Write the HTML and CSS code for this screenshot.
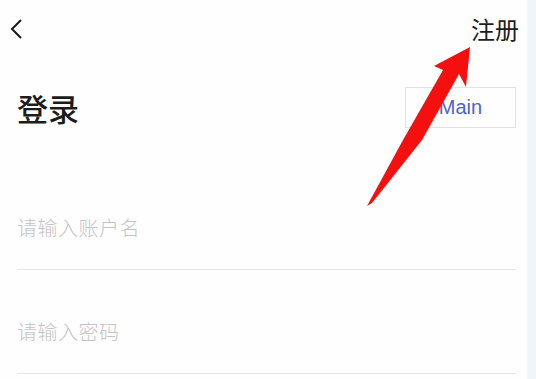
FILE: index.html
```html
<!DOCTYPE html>
<html lang="zh-CN">
<head>
    <meta charset="UTF-8">
    <meta name="viewport" content="width=device-width, initial-scale=1.0">
    <title>登录</title>
    <link rel="stylesheet" href="styles.css">
</head>
<body>
    <div class="page">
        <div class="topbar">
            <svg class="back" width="14" height="22" viewBox="0 0 14 22">
                <path d="M11 2 L2 11 L11 20" fill="none" stroke="#1a1a1a" stroke-width="2"/>
            </svg>
            <span class="register">注册</span>
        </div>

        <div class="content">
            <div class="title-row">
                <h1 class="title">登录</h1>
                <div class="env-box">Main</div>
            </div>

            <div class="field first">
                <input type="text" placeholder="请输入账户名">
            </div>
            <div class="field">
                <input type="password" placeholder="请输入密码">
            </div>
        </div>

        <!-- annotation arrow drawn over the screen -->
        <svg class="arrow" width="536" height="379" viewBox="0 0 536 379">
            <polygon points="470,47 434,66 443,70 403,140 367,206 372,203 422,140 459,74 466,87" fill="#f50f0f"/>
        </svg>
    </div>
    <div class="edge"></div>
</body>
</html>
```

FILE: styles.css
```css
body {
    margin: 0;
    display: flex;
    height: 379px;
    overflow: hidden;
    font-family: "Noto Sans CJK SC", "Noto Sans", sans-serif;
    background: #fdfdfd;
}

.page {
    flex: 1;
    position: relative;
    background: #fefefe;
}

.edge {
    width: 8px;
    background: #f0f5fb;
    border-left: 1px solid #f6f8fb;
}

.topbar {
    display: flex;
    justify-content: space-between;
    align-items: center;
    height: 24px;
    padding: 17px 8px 0 10px;
}

.back {
    display: block;
}

.register {
    font-size: 24px;
    line-height: 24px;
    color: #1d1d1d;
}

.content {
    padding: 0 11px 0 17px;
}

.title-row {
    display: flex;
    justify-content: space-between;
    align-items: center;
    margin-top: 46px;
}

.title {
    margin: 0;
    font-size: 31px;
    line-height: 32px;
    font-weight: 500;
    color: #1c1c1c;
}

.env-box {
    box-sizing: border-box;
    width: 111px;
    height: 41px;
    border: 1px solid #e2e2e6;
    display: flex;
    align-items: center;
    justify-content: center;
    font-family: "Liberation Sans", Arial, sans-serif;
    font-size: 20px;
    color: #4d64c4;
}

.field {
    padding: 51px 0 32px;
    border-bottom: 1px solid #e8e8ea;
}

.field.first {
    padding-top: 89px;
}

.field input {
    display: block;
    width: 100%;
    height: 20px;
    padding: 0;
    border: none;
    outline: none;
    background: transparent;
    font-family: "Noto Sans CJK SC", sans-serif;
    font-size: 20px;
    font-weight: 300;
    line-height: 20px;
    letter-spacing: 0.5px;
}

.field input::placeholder {
    color: #c4c4c6;
}

.arrow {
    position: absolute;
    top: 0;
    left: 0;
    pointer-events: none;
}
```
